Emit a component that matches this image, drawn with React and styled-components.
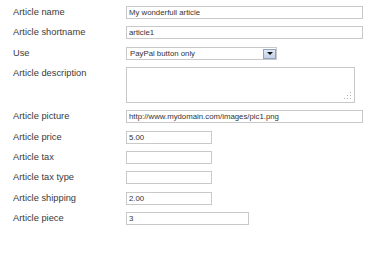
import React from "react";
import styled, { createGlobalStyle } from "styled-components";

const GlobalStyle = createGlobalStyle`
  html, body {
    margin: 0;
    padding: 0;
    background: #ffffff;
  }
  body {
    font-family: "Liberation Sans", Arial, sans-serif;
  }
`;

const Form = styled.div`
  display: grid;
  grid-template-columns: 113px auto;
  row-gap: 7.35px;
  padding: 6px 0 0 13px;
  align-items: start;
`;

const Label = styled.label`
  font-size: 9.3px;
  line-height: 13px;
  color: #3a3a3a;
  white-space: nowrap;
`;

const Field = styled.input`
  box-sizing: border-box;
  display: block;
  width: ${({ w }) => w}px;
  height: 13px;
  margin: 0;
  padding: 0 0 0 2px;
  border: 1px solid #c9c9c9;
  border-radius: 0;
  background: #fff;
  font-family: "Liberation Sans", Arial, sans-serif;
  font-size: 7.8px;
  color: #333;
  outline: none;
`;

const SelectBox = styled.div`
  position: relative;
  box-sizing: border-box;
  width: 151px;
  height: 13px;
  border: 1px solid #c9c9c9;
  background: #fff;
  display: flex;
  align-items: center;
  padding-left: 3px;
  font-size: 7.8px;
  color: #333;
`;

const DropButton = styled.div`
  position: absolute;
  top: 1px;
  right: 0;
  box-sizing: border-box;
  width: 13px;
  height: 10px;
  background: linear-gradient(#dfe8f4, #c3d1e6);
  border: 1px solid #8fa3c0;
  display: flex;
  align-items: center;
  justify-content: center;
`;

const Arrow = styled.div`
  width: 0;
  height: 0;
  border-left: 3px solid transparent;
  border-right: 3px solid transparent;
  border-top: 3px solid #111;
`;

const AreaWrap = styled.div`
  position: relative;
  width: 229px;
  height: 36px;
`;

const Area = styled.textarea`
  box-sizing: border-box;
  display: block;
  width: 229px;
  height: 36px;
  margin: 0;
  border: 1px solid #c9c9c9;
  resize: none;
  outline: none;
  background: #fff;
`;

const Grip = styled.svg`
  position: absolute;
  right: 3px;
  bottom: 3px;
`;

const fields = [
  { label: "Article name", value: "My wonderfull article", w: 237 },
  { label: "Article shortname", value: "article1", w: 237 },
  { label: "Use", select: "PayPal button only" },
  { label: "Article description", area: true },
  { label: "Article picture", value: "http://www.mydomain.com/images/pic1.png", w: 237 },
  { label: "Article price", value: "5.00", w: 86 },
  { label: "Article tax", value: "", w: 86 },
  { label: "Article tax type", value: "", w: 86 },
  { label: "Article shipping", value: "2.00", w: 86 },
  { label: "Article piece", value: "3", w: 123 },
];

const App = () => {
  return (
    <>
      <GlobalStyle />
      <Form>
        {fields.map((f) => (
          <React.Fragment key={f.label}>
            <Label>{f.label}</Label>
            {f.select ? (
              <SelectBox>
                {f.select}
                <DropButton>
                  <Arrow />
                </DropButton>
              </SelectBox>
            ) : f.area ? (
              <AreaWrap>
                <Area />
                <Grip width="9" height="9" viewBox="0 0 9 9">
                  <g fill="#b5b5b5">
                    <rect x="7" y="1" width="1" height="1" />
                    <rect x="4" y="4" width="1" height="1" />
                    <rect x="7" y="4" width="1" height="1" />
                    <rect x="1" y="7" width="1" height="1" />
                    <rect x="4" y="7" width="1" height="1" />
                    <rect x="7" y="7" width="1" height="1" />
                  </g>
                </Grip>
              </AreaWrap>
            ) : (
              <Field w={f.w} defaultValue={f.value} />
            )}
          </React.Fragment>
        ))}
      </Form>
    </>
  );
};

export default App;
